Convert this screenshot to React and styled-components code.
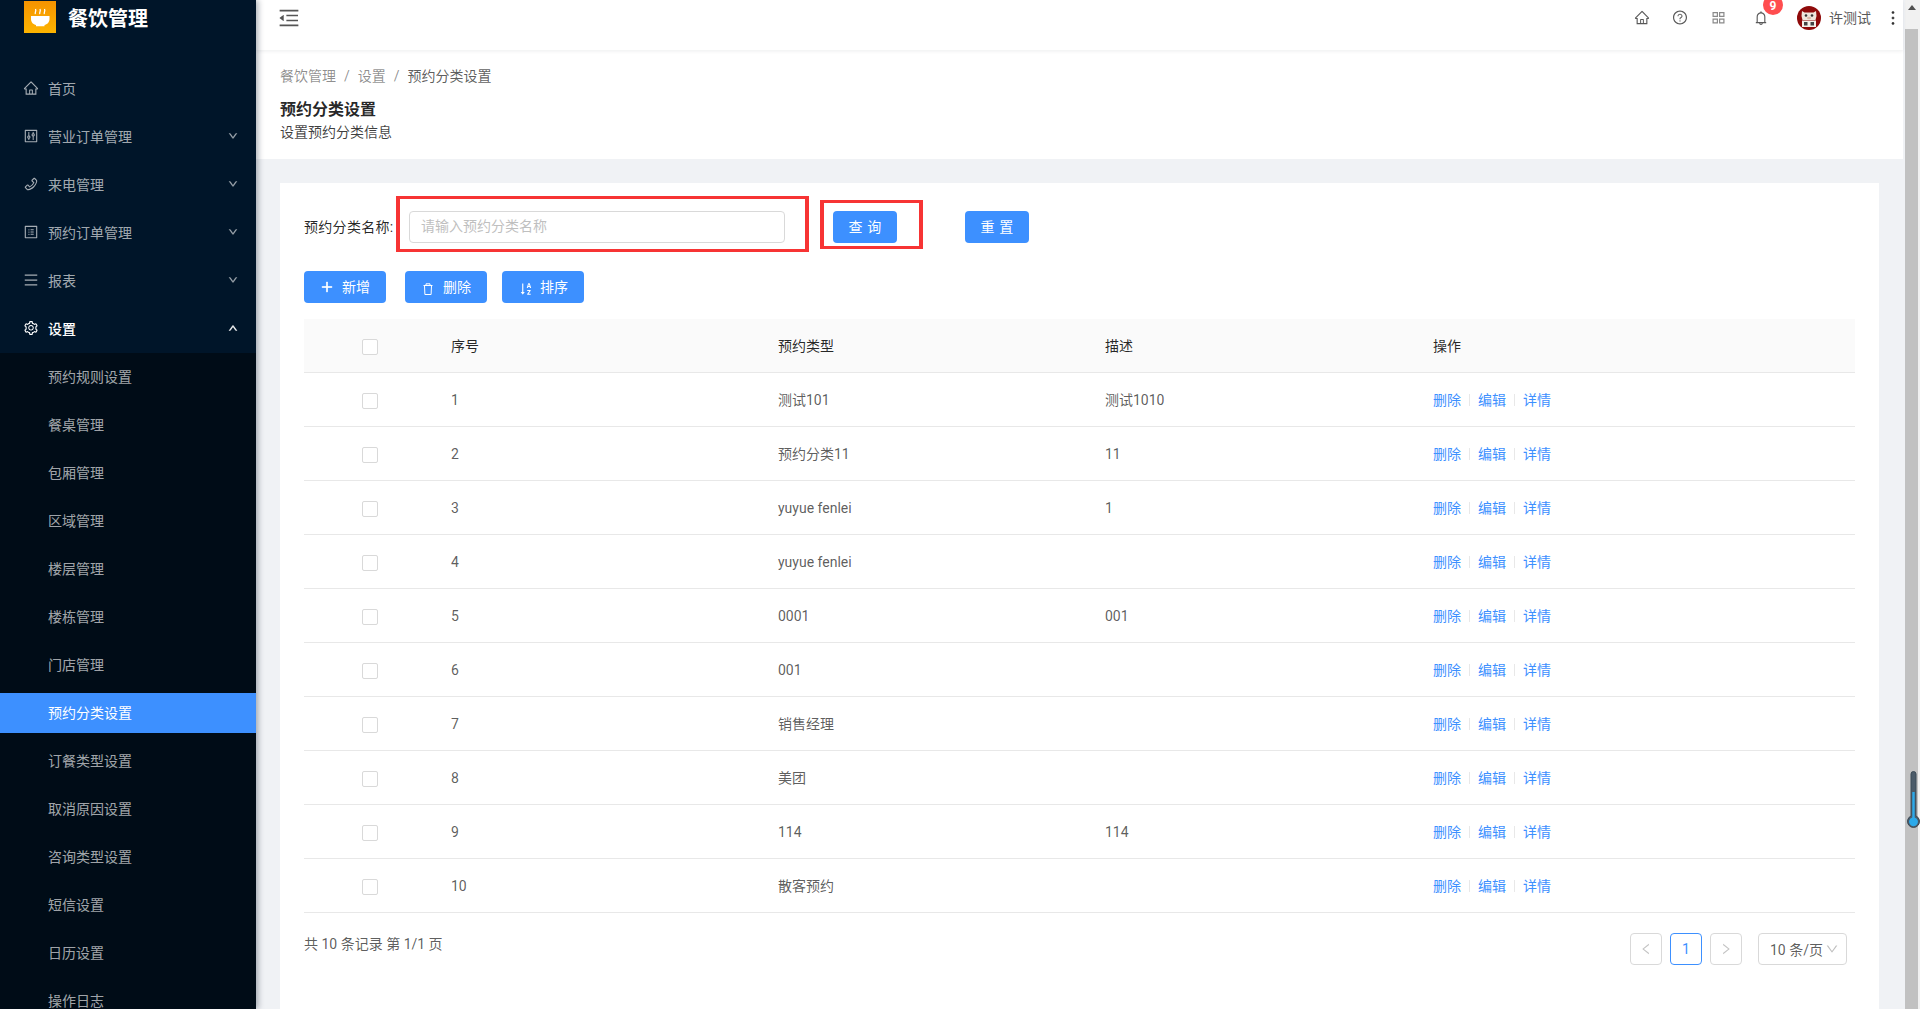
import React from "react";
import styled, { createGlobalStyle } from "styled-components";
import {
  AiOutlineHome, AiOutlineControl, AiOutlinePhone, AiOutlineProfile, AiOutlineMenu,
  AiOutlineSetting, AiOutlineDown, AiOutlineUp, AiOutlineMenuFold, AiOutlineQuestionCircle,
  AiOutlineBell, AiOutlineMore, AiOutlinePlus, AiOutlineSortAscending, AiOutlineLeft, AiOutlineRight,
} from "react-icons/ai";

const PRIMARY = "#3d90ff";

const Global = createGlobalStyle`
  html, body { margin: 0; padding: 0; height: 100%; overflow: hidden; }
  body { font-family: Roboto, "Noto Sans CJK SC", "Liberation Sans", sans-serif; font-size: 14px; color: rgba(0,0,0,.65); }
  * { box-sizing: border-box; }
`;

const Shell = styled.div`
  position: relative; display: flex; width: 1920px; height: 100vh; overflow: hidden; background: #f0f2f5;
`;
const Sidebar = styled.aside`
  flex: 0 0 256px; height: 100%; overflow: hidden; background: #001529; position: relative; z-index: 2;
  box-shadow: 2px 0 6px rgba(0, 21, 41, .35); padding-top: 1px;
`;
const Brand = styled.div`
  display: flex; align-items: center; gap: 12px; height: 32px; padding-left: 24px; margin-bottom: 36px;
`;
const BrandName = styled.span`
  color: #fff; font-size: 20px; font-weight: 700; line-height: 28px; padding-top: 4px;
`;
const MenuRow = styled.div`
  display: flex; align-items: center; height: 40px; margin-bottom: 8px; padding: 0 24px 2px;
  color: ${p => (p.$open ? "#fff" : "rgba(255,255,255,.65)")};
  font-weight: ${p => (p.$open ? 500 : 400)};
  svg.lead { font-size: 16px; margin: 0 9px 0 -1px; flex: none; }
`;
const MenuLabel = styled.span` flex: 1; `;
const Caret = styled.span`
  display: flex; font-size: 10px; color: ${p => (p.$open ? "#fff" : "rgba(255,255,255,.5)")};
  margin-right: -6px;
  svg { stroke: currentColor; stroke-width: 70; }
`;
const SubMenu = styled.div` background: #000c17; padding-top: 4px; margin-top: -4px; `;
const SubRow = styled.div`
  height: 40px; line-height: 40px; margin-bottom: 8px; padding-left: 48px;
  background: ${p => (p.$active ? PRIMARY : "transparent")};
  color: ${p => (p.$active ? "#fff" : "rgba(255,255,255,.65)")};
`;

const Main = styled.div` flex: 0 0 1647px; display: flex; flex-direction: column; min-width: 0; `;
const TopBar = styled.header`
  flex: 0 0 50px; display: flex; align-items: center; background: #fff; padding: 0 0 15px 24px;
  box-shadow: 0 1px 4px rgba(0, 21, 41, .08); position: relative; z-index: 1; color: #595959;
`;
const Collapse = styled.span` display: flex; font-size: 24px; margin-left: -3px; color: #555; `;
const TopRight = styled.div` margin-left: auto; display: flex; align-items: center; `;
const TopIcon = styled.span`
  display: flex; justify-content: center; width: ${p => p.$w}px; margin-left: ${p => p.$ml || 0}px;
  font-size: ${p => p.$size || 16}px; color: #595959; position: relative;
`;
const Badge = styled.span`
  position: absolute; left: 10px; top: -14px; width: 20px; height: 20px; padding-top: 5px; border-radius: 50%;
  background: #ff4d4f; color: #fff; font-size: 12px; font-weight: 700; line-height: 13px; text-align: center;
`;
const UserName = styled.span` margin-left: 8px; color: #595959; padding-bottom: 2px; `;
const More = styled.span`
  display: flex; font-size: 20px; color: #333; margin-left: 12px;
  svg { stroke: currentColor; stroke-width: 30; }
`;

const PageHead = styled.section`
  flex: 0 0 109px; background: #fff; padding: 15px 24px 0;
`;
const Crumbs = styled.div` display: flex; line-height: 22px; color: rgba(0,0,0,.45); margin-bottom: 11px; `;
const CrumbSep = styled.span` margin: 0 8px; `;
const CrumbNow = styled.span` color: rgba(0,0,0,.65); `;
const Title = styled.h1`
  margin: 0; font-size: 16px; font-weight: 700; line-height: 23px; color: rgba(0,0,0,.85);
`;
const Sub = styled.p` margin: 0; line-height: 22px; color: rgba(0,0,0,.75); `;

const Content = styled.main` flex: 1; padding: 24px 24px 0; min-height: 0; `;
const Card = styled.div`
  position: relative; background: #fff; height: 100%; padding: 28px 24px 0;
`;
const SearchRow = styled.form` display: flex; align-items: center; height: 32px; `;
const FieldLabel = styled.label`
  width: 105px; color: rgba(0,0,0,.85); white-space: nowrap; padding-bottom: 2px; letter-spacing: .3px;
`;
const Field = styled.input`
  width: 376px; height: 32px; border: 1px solid #d9d9d9; border-radius: 4px; padding: 0 11px 2px;
  font: inherit; outline: 0; color: #595959;
  &::placeholder { color: #bfbfbf; opacity: 1; }
`;
const Btn = styled.button`
  display: inline-flex; align-items: center; justify-content: center; height: 32px;
  width: ${p => p.$w}px; margin-left: ${p => p.$ml || 0}px; background: ${PRIMARY}; border: 0; border-radius: 4px;
  color: #fff; font: inherit; padding: 0 0 3px;
  svg { margin-right: ${p => p.$iconGap ?? 8}px; flex: none; }
`;
const Spaced = styled.span` letter-spacing: .34em; margin-right: -.34em; `;
const Toolbar = styled.div` display: flex; margin: 28px 0 16px; `;
const RedMark = styled.span`
  position: absolute; left: ${p => p.$x}px; top: ${p => p.$y}px; width: ${p => p.$w}px; height: ${p => p.$h}px;
  border: solid #f73434; border-width: 3px 4px; pointer-events: none;
`;

const Table = styled.table` width: 100%; border-collapse: collapse; table-layout: fixed; `;
const Th = styled.th`
  height: 53px; background: #fafafa; text-align: left; font-weight: 400; color: rgba(0,0,0,.85);
  padding: 0 0 0 16px; border-bottom: 1px solid #e8e8e8; font-size: 14px;
`;
const Td = styled.td`
  height: 54px; padding: ${p => (p.$latin ? 2 : 0)}px 0 0 16px; border-bottom: 1px solid #e8e8e8; color: rgba(0,0,0,.65);
`;
const CheckCell = styled.div` display: flex; justify-content: center; margin-left: -16px; padding-top: 4px; `;
const Box = styled.span`
  display: block; width: 16px; height: 16px; border: 1px solid #d9d9d9; border-radius: 2px; background: #fff;
`;
const Action = styled.a` color: ${PRIMARY}; `;
const Divider = styled.i`
  display: inline-block; width: 1px; height: 12px; margin: 0 8px; background: #e8e8e8; vertical-align: -1px;
`;

const Foot = styled.div`
  display: flex; justify-content: space-between; align-items: flex-start; padding: 20px 8px 0 0;
`;
const Total = styled.span` line-height: 22px; color: rgba(0,0,0,.65); `;
const Pager = styled.div` display: flex; align-items: center; gap: 8px; `;
const PageBox = styled.span`
  display: flex; align-items: center; justify-content: center; width: 32px; height: 32px; border-radius: 4px;
  border: 1px solid ${p => (p.$on ? PRIMARY : "#d9d9d9")}; color: ${p => (p.$on ? PRIMARY : "#c4c4c4")}; font-size: 14px;
`;
const SizeSelect = styled.span`
  display: flex; align-items: center; width: 89px; height: 32px; margin-left: 8px; padding-left: 11px;
  border: 1px solid #d9d9d9; border-radius: 4px; color: rgba(0,0,0,.65); white-space: nowrap;
  svg { color: #bfbfbf; font-size: 14px; margin-left: 2px; flex: none; }
`;

const Gutter = styled.div` flex: 0 0 2px; `;
const Rail = styled.div`
  flex: 0 0 15px; position: relative; background: #f1f1f1; padding-top: 29px; display: flex;
  &::before {
    content: ""; position: absolute; left: 3px; top: 5px;
    border: 4px solid transparent; border-top: 0; border-bottom: 5px solid #505050;
  }
`;
const Thumb = styled.div` width: 13px; height: 100%; background: #c1c1c1; `;
const Thermo = styled.svg` position: absolute; left: 1907px; top: 770px; z-index: 3; `;

const PlusIcon = styled(AiOutlinePlus)` stroke: currentColor; stroke-width: 50; margin-top: 3px; `;
const SortIcon = styled(AiOutlineSortAscending)` margin-top: 7px; `;
const TrashSvg = styled.svg` margin: 7px 0 0 2px; `;

const mainMenu = [
  ["首页", AiOutlineHome, false],
  ["营业订单管理", AiOutlineControl, true],
  ["来电管理", AiOutlinePhone, true],
  ["预约订单管理", AiOutlineProfile, true],
  ["报表", AiOutlineMenu, true],
];
const subMenu = ["预约规则设置", "餐桌管理", "包厢管理", "区域管理", "楼层管理", "楼栋管理", "门店管理", "预约分类设置", "订餐类型设置", "取消原因设置", "咨询类型设置", "短信设置", "日历设置", "操作日志"];
const rows = [
  ["测试101", "测试1010"], ["预约分类11", "11"], ["yuyue fenlei", "1"], ["yuyue fenlei", ""], ["0001", "001"],
  ["001", ""], ["销售经理", ""], ["美团", ""], ["114", "114"], ["散客预约", ""],
];
const isLatin = s => /^[\x20-\x7e]+$/.test(s);

const Logo = () => (
  <svg width="32" height="32" viewBox="0 0 32 32">
    <defs>
      <linearGradient id="lg" x1="0" y1="0" x2="0" y2="1">
        <stop offset="0" stopColor="#f59300" />
        <stop offset="1" stopColor="#fdb400" />
      </linearGradient>
    </defs>
    <rect width="32" height="32" fill="url(#lg)" />
    <path d="M7 15h18.500v3c0 3.500-2.500 5.500-5 6v1.200h-8.500V24c-2.500-.5-5-2.500-5-6z" fill="#fff" />
    <path d="M11.500 13c-1.200-1.500 1.200-2.500 0-5M16 13c-1.200-1.500 1.200-2.500 0-5M20.500 13c-1.200-1.500 1.200-2.500 0-5" stroke="#fff" strokeWidth="1.300" fill="none" />
  </svg>
);
const Grid = () => (
  <svg width="13" height="13" viewBox="0 0 13 13" fill="#8a8a8a">
    <path d="M.5 1h5.500v5H.5zM1.700 2.200v2.600h3.100V2.200zM7 1h5.500v5H7zM8.200 2.200v2.600h3.100V2.200zM.5 7.500h5.500v5H.5zM1.700 8.700v2.600h3.100V8.700zM7 7.500h5.500v5H7zM8.200 8.700v2.600h3.100V8.700z" fillRule="evenodd" />
  </svg>
);
const Avatar = () => (
  <svg width="24" height="24" viewBox="0 0 24 24">
    <circle cx="12" cy="12" r="12" fill="#8f0a0a" />
    <path d="M5 5l2.500 1.500h9L19 5l.5 5-1 4h-13l-1-4z" fill="#efe6dc" />
    <circle cx="9" cy="9.500" r="1.300" fill="#333" />
    <circle cx="15" cy="9.500" r="1.300" fill="#333" />
    <ellipse cx="12" cy="12" rx="2" ry="1.200" fill="#d9b8a8" />
    <path d="M5 14.500h14V21H5z" fill="#f4f1ea" />
    <path d="M7 16h3.500v3.500H7zM13.500 16H17v3.500h-3.500z" fill="#444" />
  </svg>
);
const Trash = () => (
  <TrashSvg width="10" height="12" viewBox="0 0 10 12" fill="none" stroke="#fff" strokeWidth="1">
    <path d="M.5 2.500h9M3 2.500V.8h4v1.700M1.500 2.500l.4 9h6.200l.4-9" />
  </TrashSvg>
);

export default function App() {
  return (
    <Shell>
      <Global />
      <Sidebar>
        <Brand><Logo /><BrandName>餐饮管理</BrandName></Brand>
        {mainMenu.map(([label, Icon, hasCaret]) => (
          <MenuRow key={label}>
            <Icon className="lead" />
            <MenuLabel>{label}</MenuLabel>
            {hasCaret && <Caret><AiOutlineDown /></Caret>}
          </MenuRow>
        ))}
        <MenuRow $open>
          <AiOutlineSetting className="lead" />
          <MenuLabel>设置</MenuLabel>
          <Caret $open><AiOutlineUp /></Caret>
        </MenuRow>
        <SubMenu>
          {subMenu.map(s => <SubRow key={s} $active={s === "预约分类设置"}>{s}</SubRow>)}
        </SubMenu>
      </Sidebar>
      <Main>
        <TopBar>
          <Collapse><AiOutlineMenuFold /></Collapse>
          <TopRight>
            <TopIcon $w={16} $size={17}><AiOutlineHome /></TopIcon>
            <TopIcon $w={16} $ml={22} $size={17}><AiOutlineQuestionCircle /></TopIcon>
            <TopIcon $w={14} $ml={23}><Grid /></TopIcon>
            <TopIcon $w={16} $ml={28} $size={18}>
              <AiOutlineBell />
              <Badge>9</Badge>
            </TopIcon>
            <TopIcon $w={24} $ml={28}><Avatar /></TopIcon>
            <UserName>许测试</UserName>
            <More><AiOutlineMore /></More>
          </TopRight>
        </TopBar>
        <PageHead>
          <Crumbs>
            <span>餐饮管理</span><CrumbSep>/</CrumbSep>
            <span>设置</span><CrumbSep>/</CrumbSep>
            <CrumbNow>预约分类设置</CrumbNow>
          </Crumbs>
          <Title>预约分类设置</Title>
          <Sub>设置预约分类信息</Sub>
        </PageHead>
        <Content>
          <Card>
            <SearchRow>
              <FieldLabel>预约分类名称:</FieldLabel>
              <Field placeholder="请输入预约分类名称" readOnly />
              <Btn type="button" $w={64} $ml={48}><Spaced>查询</Spaced></Btn>
              <Btn type="button" $w={64} $ml={68}><Spaced>重置</Spaced></Btn>
            </SearchRow>
            <RedMark $x={116} $y={13} $w={413} $h={56} />
            <RedMark $x={540} $y={17} $w={103} $h={49} />
            <Toolbar>
              <Btn type="button" $w={82}><PlusIcon size={14} />新增</Btn>
              <Btn type="button" $w={82} $ml={19} $iconGap={10}><Trash />删除</Btn>
              <Btn type="button" $w={82} $ml={15} $iconGap={6}><SortIcon size={16} />排序</Btn>
            </Toolbar>
            <Table>
              <colgroup>
                <col width="131" /><col width="327" /><col width="327" /><col width="328" /><col />
              </colgroup>
              <thead>
                <tr>
                  <Th><CheckCell><Box /></CheckCell></Th>
                  <Th>序号</Th><Th>预约类型</Th><Th>描述</Th><Th>操作</Th>
                </tr>
              </thead>
              <tbody>
                {rows.map(([type, desc], i) => (
                  <tr key={i}>
                    <Td><CheckCell><Box /></CheckCell></Td>
                    <Td $latin>{i + 1}</Td>
                    <Td $latin={isLatin(type)}>{type}</Td>
                    <Td $latin={isLatin(desc)}>{desc}</Td>
                    <Td>
                      <Action>删除</Action><Divider />
                      <Action>编辑</Action><Divider />
                      <Action>详情</Action>
                    </Td>
                  </tr>
                ))}
              </tbody>
            </Table>
            <Foot>
              <Total>共 10 条记录 第 1/1 页</Total>
              <Pager>
                <PageBox><AiOutlineLeft size={14} /></PageBox>
                <PageBox $on>1</PageBox>
                <PageBox><AiOutlineRight size={14} /></PageBox>
                <SizeSelect>10 条/页<AiOutlineDown /></SizeSelect>
              </Pager>
            </Foot>
          </Card>
        </Content>
      </Main>
      <Gutter />
      <Rail><Thumb /></Rail>
      <Thermo width="13" height="60" viewBox="0 0 13 60">
        <path d="M4 4a2.500 2.500 0 0 1 5 0v42a6 6 0 1 1-5 0z" fill="#4b5b69" stroke="#3b4a56" strokeWidth="1" />
        <path d="M5.300 22h2.400v25.500a4.400 4.400 0 1 1-2.400 0z" fill="#2ba9ea" />
      </Thermo>
    </Shell>
  );
}
